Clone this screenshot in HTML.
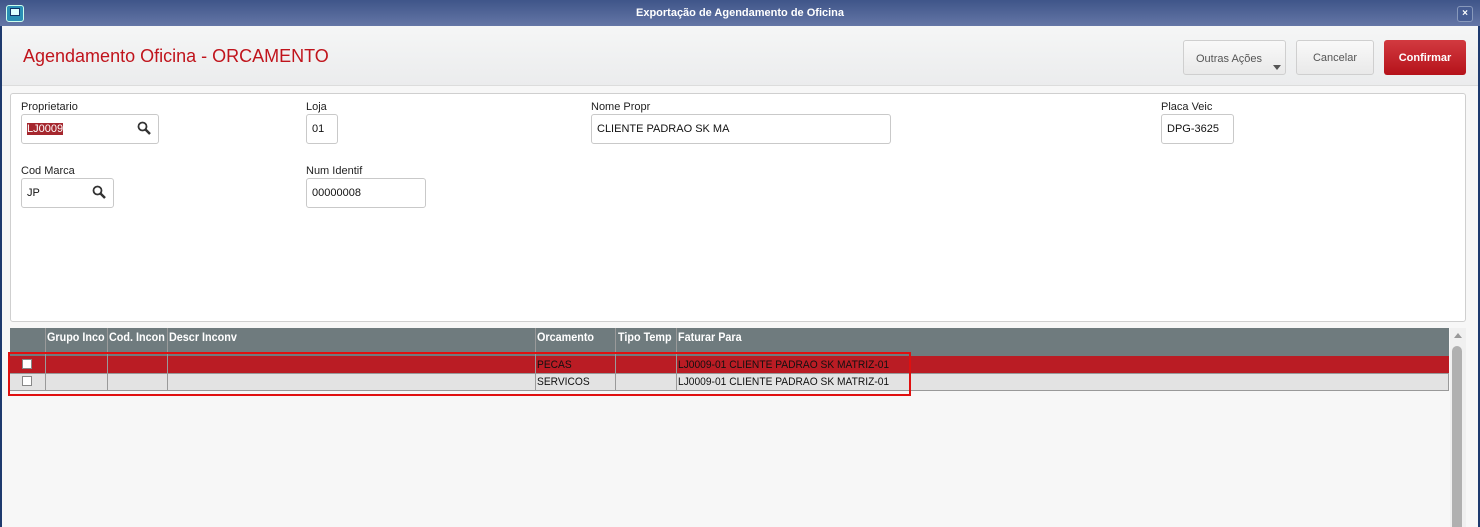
<!DOCTYPE html>
<html><head><style>
*{margin:0;padding:0;box-sizing:border-box}
body{width:1480px;height:527px;overflow:hidden;background:#f7f7f7;font-family:"Liberation Sans",Arial,sans-serif;position:relative}
.a{position:absolute}
.lbl{font-size:11px;color:#222}
.inp{border:1px solid #c9c9c9;border-radius:3px;background:#fff;font-size:11px;padding-left:5px;line-height:28px;color:#111}
.hd{color:#fff;font-size:12px;font-weight:bold;top:330px;transform:scaleX(0.9);transform-origin:0 0;white-space:nowrap}
.c{font-size:11px;color:#111;transform:scaleX(0.93);transform-origin:0 0}
.vl{width:1px;background:#9a9a9a}
</style></head><body>
<div class="a" style="left:0;top:0;width:1480px;height:527px;border-left:2px solid #1e3a6e;border-right:2px solid #1e3a6e"></div>
<div class="a" style="left:0;top:0;width:1480px;height:26px;background:linear-gradient(#3f5589,#6476a6);"></div>
<div class="a" style="left:6px;top:5px;width:18px;height:17px;border-radius:3px;background:#2a8fb5;border:1px solid #cfe"></div>
<div class="a" style="left:10px;top:8px;width:10px;height:8px;background:#dff;border:1px solid #136"></div>
<div class="a" style="left:0;top:7px;width:1480px;text-align:center;color:#fff;font-size:11px;font-weight:bold">Exportação de Agendamento de Oficina</div>
<div class="a" style="left:1457px;top:6px;width:16px;height:16px;border:1px solid #8899bb;border-radius:3px;background:#475d93;color:#fff;font-size:10px;text-align:center;line-height:14px;font-weight:bold">×</div>
<div class="a" style="left:2px;top:26px;width:1476px;height:60px;background:linear-gradient(#f5f6f6,#ebeced);border-bottom:1px solid #dcdcdc"></div>
<div class="a" style="left:23px;top:46px;font-size:18px;color:#c0141c">Agendamento Oficina - ORCAMENTO</div>
<div class="a" style="left:1183px;top:40px;width:103px;height:35px;border:1px solid #cfcfcf;border-radius:3px;background:linear-gradient(#f9f9f9,#e9e9e9);font-size:11px;color:#555;padding:12px 0 0 12px">Outras Ações</div>
<div class="a" style="left:1273px;top:65px;width:0;height:0;border-left:4px solid transparent;border-right:4px solid transparent;border-top:5px solid #555"></div>
<div class="a" style="left:1296px;top:40px;width:78px;height:35px;border:1px solid #cfcfcf;border-radius:3px;background:linear-gradient(#f9f9f9,#e9e9e9);font-size:11px;color:#555;text-align:center;line-height:35px">Cancelar</div>
<div class="a" style="left:1384px;top:40px;width:82px;height:35px;border-radius:3px;background:linear-gradient(#d23a40,#b5121a);font-size:11px;color:#fff;font-weight:bold;text-align:center;line-height:36px">Confirmar</div>
<div class="a" style="left:10px;top:93px;width:1456px;height:229px;background:#fff;border:1px solid #cfcfcf;border-radius:3px"></div>
<div class="a lbl" style="left:21px;top:101px">Proprietario</div>
<div class="a inp" style="left:21px;top:114px;width:138px;height:30px"><span style="background:#a5272e;color:#fff">LJ0009</span></div>
<div class="a lbl" style="left:306px;top:101px">Loja</div>
<div class="a inp" style="left:306px;top:114px;width:32px;height:30px">01</div>
<div class="a lbl" style="left:591px;top:101px">Nome Propr</div>
<div class="a inp" style="left:591px;top:114px;width:300px;height:30px">CLIENTE PADRAO SK MA</div>
<div class="a lbl" style="left:1161px;top:101px">Placa Veic</div>
<div class="a inp" style="left:1161px;top:114px;width:73px;height:30px">DPG-3625</div>
<div class="a lbl" style="left:21px;top:165px">Cod Marca</div>
<div class="a inp" style="left:21px;top:178px;width:93px;height:30px">JP</div>
<div class="a lbl" style="left:306px;top:165px">Num Identif</div>
<div class="a inp" style="left:306px;top:178px;width:120px;height:30px">00000008</div>
<svg class="a" style="left:137px;top:121px" width="14" height="14"><circle cx="5.5" cy="5.5" r="4" fill="none" stroke="#333" stroke-width="1.8"/><path d="M8.5 8.5L13 13" stroke="#333" stroke-width="2.5"/></svg>
<svg class="a" style="left:92px;top:185px" width="14" height="14"><circle cx="5.5" cy="5.5" r="4" fill="none" stroke="#333" stroke-width="1.8"/><path d="M8.5 8.5L13 13" stroke="#333" stroke-width="2.5"/></svg>
<div class="a" style="left:10px;top:328px;width:1439px;height:28px;background:#6f7b7e"></div>
<div class="a" style="left:10px;top:356px;width:1439px;height:18px;background:#ba1c24"></div>
<div class="a" style="left:10px;top:374px;width:1439px;height:17px;background:#e3e3e3;border-bottom:1px solid #999;border-right:1px solid #999"></div>
<div class="a vl" style="left:45px;top:328px;height:63px"></div>
<div class="a vl" style="left:107px;top:328px;height:63px"></div>
<div class="a vl" style="left:167px;top:328px;height:63px"></div>
<div class="a vl" style="left:535px;top:328px;height:63px"></div>
<div class="a vl" style="left:615px;top:328px;height:63px"></div>
<div class="a vl" style="left:676px;top:328px;height:63px"></div>
<div class="a" style="left:10px;top:373px;width:1439px;height:1px;background:#999"></div>
<div class="a hd" style="left:47px">Grupo Inco</div>
<div class="a hd" style="left:109px">Cod. Incon</div>
<div class="a hd" style="left:169px">Descr Inconv</div>
<div class="a hd" style="left:537px">Orcamento</div>
<div class="a hd" style="left:618px">Tipo Temp</div>
<div class="a hd" style="left:678px">Faturar Para</div>
<div class="a" style="left:22px;top:359px;width:10px;height:10px;background:#fff;border:1px solid #888"></div>
<div class="a" style="left:22px;top:376px;width:10px;height:10px;background:#fff;border:1px solid #888"></div>
<div class="a c" style="left:537px;top:359px">PECAS</div>
<div class="a c" style="left:678px;top:359px">LJ0009-01 CLIENTE PADRAO SK MATRIZ-01</div>
<div class="a c" style="left:537px;top:376px">SERVICOS</div>
<div class="a c" style="left:678px;top:376px">LJ0009-01 CLIENTE PADRAO SK MATRIZ-01</div>
<div class="a" style="left:8px;top:352px;width:903px;height:44px;border:2px solid #e01010"></div>
<div class="a" style="left:1450px;top:328px;width:16px;height:199px;background:#f0f0f0"></div>
<div class="a" style="left:1454px;top:333px;width:0;height:0;border-left:4px solid transparent;border-right:4px solid transparent;border-bottom:5px solid #999"></div>
<div class="a" style="left:1452px;top:346px;width:10px;height:181px;background:#b0b0b0;border-radius:5px 5px 0 0"></div>
</body></html>
